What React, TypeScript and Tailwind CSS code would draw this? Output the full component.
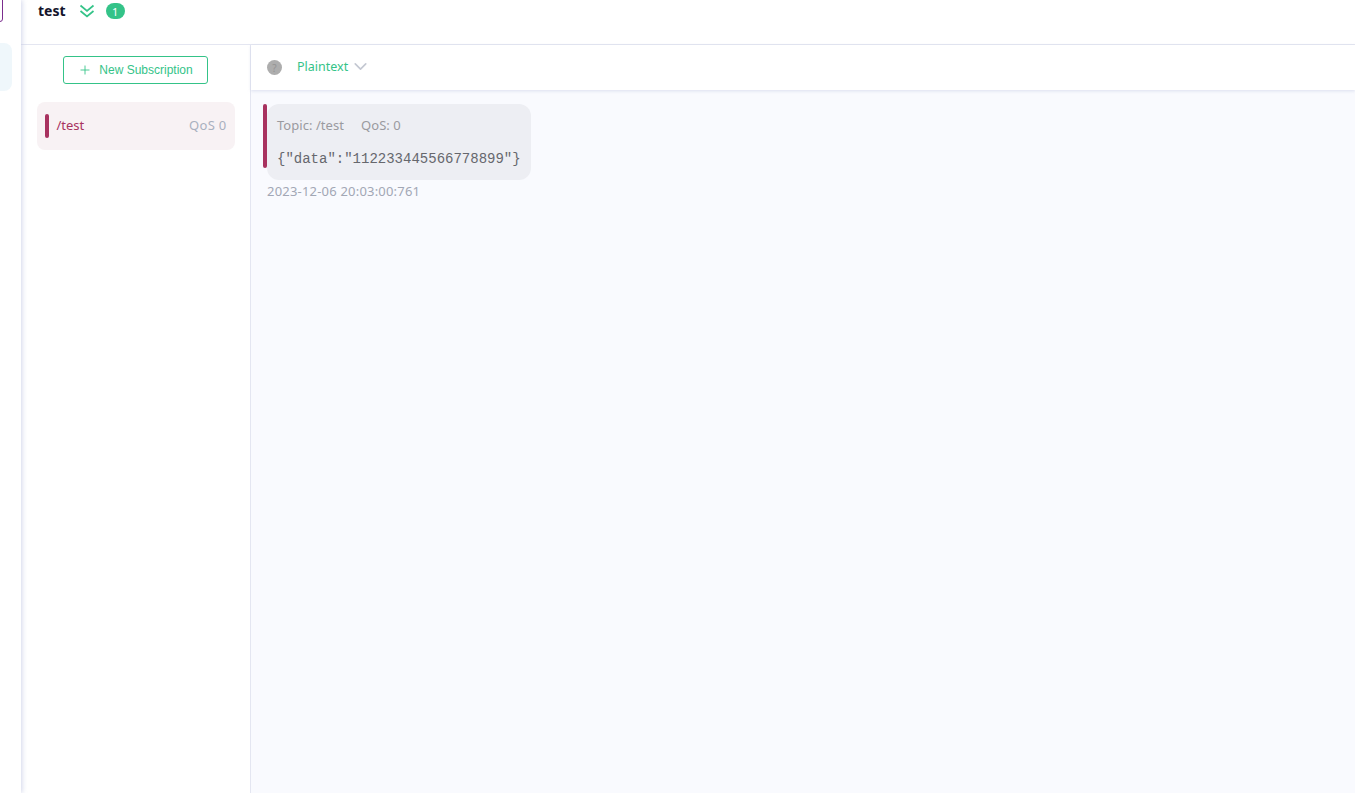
import React from 'react';
import { Plus, ChevronDown } from 'lucide-react';

function App() {
  return (
    <div className="flex h-[793px] w-[1355px] overflow-hidden bg-white font-['Noto_Sans','Open_Sans',sans-serif]">
      {/* left rail, mostly scrolled out of view */}
      <div className="relative z-10 flex w-[21px] shrink-0 flex-col bg-white shadow-[1px_0_5px_rgba(190,195,225,0.7)]">
        <div className="-ml-2 -mt-2 h-[30px] w-[11px] rounded-[3px] border border-[#7b2d8e]" />
        <div className="-ml-4 mt-[21px] h-12 w-7 rounded-lg bg-[#eff7fb]" />
      </div>

      <div className="flex min-w-0 flex-1 flex-col">
        <header className="flex h-[45px] shrink-0 items-start border-b border-[#e4e6f1] pl-[17px]">
          <span className="mt-[1px] text-sm font-bold leading-[20px] text-[#14142b]">test</span>
          <svg
            className="ml-[13px] mt-[4px]"
            width="16"
            height="15"
            viewBox="0 0 16 15"
            fill="none"
            stroke="#34c388"
            strokeWidth="1.7"
          >
            <path d="M1.5 1.5 8 7l6.5-5.5" />
            <path d="M1.5 7 8 12.5 14.5 7" />
          </svg>
          <span className="ml-[11px] mt-[3px] flex h-4 w-[19px] items-center justify-center rounded-full bg-[#34c388] text-[11px] leading-none text-white">
            1
          </span>
        </header>

        <div className="flex min-h-0 flex-1">
          <aside className="flex w-[230px] shrink-0 flex-col items-center border-r border-[#e4e6f1] bg-white pt-[11px]">
            <button
              type="button"
              className="flex h-[28px] w-[145px] items-center justify-center rounded-[3px] border border-[#34c388] font-['Liberation_Sans',sans-serif] text-xs text-[#34c388]"
            >
              <Plus className="mr-[7px]" size={14} strokeWidth={1.5} />
              New Subscription
            </button>
            <div className="mt-[18px] flex h-12 w-[198px] items-center rounded-lg bg-[#f8f2f4] pl-2 pr-2">
              <span className="h-6 w-1 rounded-sm bg-[#a8325f]" />
              <span className="ml-2 text-[13px] text-[#a8325f]">/test</span>
              <span className="ml-auto text-[13px] tracking-[0.3px] text-[#a9b0bf]">QoS 0</span>
            </div>
          </aside>

          <main className="flex min-w-0 flex-1 flex-col bg-[#f9fafe]">
            <div className="flex h-[45px] shrink-0 items-center bg-white pb-[2px] pl-4 shadow-[0_1px_3px_rgba(200,205,230,0.6)]">
              <span className="mt-[2px] flex h-[15px] w-[15px] items-center justify-center rounded-full bg-[#adadad] text-[10px] leading-none text-[#949494]">
                ?
              </span>
              <span className="ml-[15px] mt-[2px] text-[12.5px] text-[#34c388]">Plaintext</span>
              <ChevronDown className="ml-[2px] text-[#c4c8d2]" size={21} strokeWidth={1.9} />
            </div>

            <div className="pl-4 pt-[14px]">
              <div className="relative h-[76px] w-[264px] rounded-[12px] bg-[#edeef3] pl-[10px] pt-[12px]">
                <span className="absolute -left-[4px] top-0 h-[64px] w-1 rounded-sm bg-[#a8325f]" />
                <div className="flex text-[13px] leading-[18px] tracking-[0.05px] text-[#9a9a9f]">
                  <span>Topic: /test</span>
                  <span className="ml-[17px]">QoS: 0</span>
                </div>
                <div className="mt-[16px] font-['Liberation_Mono',monospace] text-sm leading-[18px] text-[#66676d]">
                  {'{"data":"112233445566778899"}'}
                </div>
              </div>
              <div className="mt-[1px] text-[13px] leading-[20px] tracking-[0.2px] text-[#a2a7b5]">2023-12-06 20:03:00:761</div>
            </div>
          </main>
        </div>
      </div>
    </div>
  );
}

export default App;
